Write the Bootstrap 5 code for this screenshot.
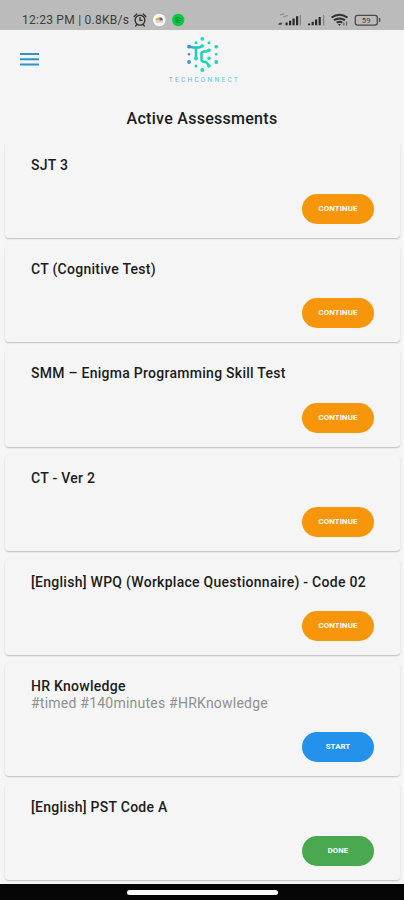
<!DOCTYPE html>
<html lang="en">
<head>
<meta charset="utf-8">
<meta name="viewport" content="width=device-width, initial-scale=1">
<title>Active Assessments</title>
<link href="https://cdn.jsdelivr.net/npm/bootstrap@5.3.0/dist/css/bootstrap.min.css" rel="stylesheet">
<style>
body{font-family:Roboto,"Liberation Sans",sans-serif;background:#f5f5f5;color:#1c1c1c}
.screen{height:900px}
.status{height:30px;background:#bbb;padding:10px 23px 0 22px;color:#3d3d3d}
.clock{font-size:12px;line-height:21px;letter-spacing:.25px;width:110px;white-space:nowrap}
.topbar{height:60px;padding-left:20px}
.menu{line-height:0;margin-top:22px}
.logo{margin-left:128px;margin-top:5px}
.heading{font-size:16px;line-height:20px;font-weight:500;letter-spacing:.28px;padding-top:19px;height:52px}
.item{height:96.2px;margin:0 4px 8px 5px;padding:15px 26px 14px;border-radius:4px;box-shadow:0 1px 1.5px rgba(0,0,0,.22)}
.item.tall{height:112.6px}
.name{font-size:14px;line-height:17px;font-weight:500;letter-spacing:.27px;white-space:nowrap}
.tags{font-size:14px;line-height:16px;letter-spacing:.23px;color:#909090}
.action{width:72px;height:30px;border:0;border-radius:15px;font-size:7.8px;font-weight:700;letter-spacing:.1px;color:#fff;padding:0;line-height:30px}
.action:hover{color:#fff}
.go{background:#f8960b}.begin{background:#2491eb}.finished{background:#4aa850}
.homebar{height:16px;background:#050505}
.pill{width:151px;height:5px;background:#fff}
</style>
</head>
<body>
<div class="screen d-flex flex-column overflow-hidden">
  <div class="status d-flex flex-shrink-0">
    <span class="clock">12:23 PM | 0.8KB/s</span>
    <svg width="54" height="20" viewBox="132 10 54 20">
      <g fill="none" stroke="#333" stroke-width="1.4" stroke-linecap="round"><circle cx="140" cy="20.2" r="4.9"/><path d="M134.2 16.5l2.6-2.4M145.800 16.500l-2.600-2.400M140 17.600v2.800h2M136.700 24.700l-1 1.200M143.300 24.700l1 1.200"/></g>
      <circle cx="159.300" cy="20" r="6.300" fill="#f7f7f5"/><path d="M155.500 20.500a3.200 3.200 0 0 1 4-3v3z" fill="#eda52d"/><path d="M159.500 17.200a3 3 0 0 1 3.300 3.300h-3.300z" fill="#725a70"/><path d="M156 22h7" stroke="#aab4c8" stroke-width="1"/>
      <circle cx="178.200" cy="20" r="6.200" fill="#0bc744"/><path d="M175 18.200q3.300-1 6.500.6M175.300 20.300q3-.8 5.600.5M175.600 22.200q2.500-.6 4.600.4" fill="none" stroke="#087c31" stroke-width=".9"/>
    </svg>
    <svg class="ms-auto" width="106" height="20" viewBox="276 10 106 20">
      <path d="M281 15l4-1.200M284 17l5-1.500" stroke="#8c8c8c" stroke-width="1.300"/><path d="M279 24.800l1.500-2h3l-1 2z" fill="#444"/>
      <g fill="#292929"><path d="M286.500 22.500h2.200v2.800h-2.200zM290 20.700h2.200v4.600H290zM293.500 18.500h2.200v6.800h-2.200zM297 16.300h2.200v9H297z"/><path d="M309 23.500h2.200v1.800H309zM312.600 21.800h2.200v3.500h-2.200zM316 19.600h2.200v5.700H316zM319.600 17h2.200v8.300h-2.200z"/></g>
      <path d="M301.300 15v10.300M324.700 15v10.300" stroke="#777" stroke-width="1"/>
      <g fill="none" stroke="#303030" stroke-width="2"><path d="M332.500 17.500q8-5.500 16 0M335 20.200q5.500-3.600 11 0M337.700 22.700q2.800-1.800 5.600 0"/></g><path d="M339 23.900h3l-1.500 2z" fill="#303030"/><path d="M344.800 25.500v-3M347.500 21.500v4" stroke="#666" stroke-width="1.200"/>
      <rect x="356.300" y="15.300" width="22" height="9.800" rx="2.300" fill="none" stroke="#494949" stroke-width="1.300"/><path d="M380.600 18v4" stroke="#555" stroke-width="1.500"/><text x="367.200" y="23" text-anchor="middle" font-family="Roboto,sans-serif" font-size="7.800" fill="#444">59</text>
    </svg>
  </div>

  <header class="topbar d-flex align-items-start flex-shrink-0">
    <div class="menu" role="button" aria-label="Menu">
      <svg width="20" height="15" viewBox="20 52 20 15"><path d="M20 54h19M20 59.300h19M20 64.500h19" stroke="#2e91d6" stroke-width="2"/></svg>
    </div>
    <svg class="logo" width="72" height="50" viewBox="168 35 72 50">
      <defs><linearGradient id="tc" gradientUnits="userSpaceOnUse" x1="187" y1="0" x2="211" y2="0"><stop stop-color="#3d8fc9"/><stop offset=".35" stop-color="#23c5c2"/><stop offset="1" stop-color="#15e2b2"/></linearGradient>
      <linearGradient id="word" gradientUnits="userSpaceOnUse" x1="168" y1="0" x2="238" y2="0"><stop stop-color="#69acd4"/><stop offset="1" stop-color="#55d6df"/></linearGradient></defs>
      <g fill="none" stroke="url(#tc)" stroke-width="2.500" stroke-linejoin="round"><path d="M189 46.600l4.500.8h6l3-1.800M196 47.400v11.500M209 50.200l-2.500 1.200h-3l-2 1.600v7.200l2 1.800h2.500l3 3.500"/></g>
      <g fill="#16ddb2"><circle cx="202.300" cy="38.800" r="1.900"/><circle cx="209" cy="42.700" r="1.500"/><circle cx="196" cy="42.700" r="1.500"/><circle cx="202.300" cy="46" r="1.700"/><circle cx="209" cy="50.200" r="1.800"/><circle cx="196" cy="58.500" r="2"/><circle cx="209" cy="58.300" r="1.700"/><circle cx="209" cy="66" r="1.800"/><circle cx="202.300" cy="70" r="2"/><circle cx="196" cy="66" r="1.500"/></g>
      <g fill="#2fc3b9"><circle cx="216.200" cy="46.700" r="1.800"/><circle cx="216.200" cy="54.300" r="1.300"/><circle cx="216.200" cy="62" r="1.900"/></g>
      <g fill="#3f96c6"><circle cx="189" cy="46.700" r="1.900"/><circle cx="189" cy="54.300" r="1.300"/><circle cx="189" cy="62" r="1.900"/></g>
      <text x="168.800" y="81.800" textLength="69" font-family="Roboto,sans-serif" font-size="6.600" fill="url(#word)">TECHCONNECT</text>
    </svg>
  </header>

  <h1 class="heading text-center m-0 flex-shrink-0">Active Assessments</h1>

  <main class="flex-grow-1 overflow-hidden">
    <section class="item d-flex flex-column justify-content-between"><div class="name">SJT 3</div><button class="btn action go align-self-end">CONTINUE</button></section>
    <section class="item d-flex flex-column justify-content-between"><div class="name">CT (Cognitive Test)</div><button class="btn action go align-self-end">CONTINUE</button></section>
    <section class="item d-flex flex-column justify-content-between"><div class="name">SMM – Enigma Programming Skill Test</div><button class="btn action go align-self-end">CONTINUE</button></section>
    <section class="item d-flex flex-column justify-content-between"><div class="name">CT - Ver 2</div><button class="btn action go align-self-end">CONTINUE</button></section>
    <section class="item d-flex flex-column justify-content-between"><div class="name">[English] WPQ (Workplace Questionnaire) - Code 02</div><button class="btn action go align-self-end">CONTINUE</button></section>
    <section class="item tall d-flex flex-column justify-content-between"><div><div class="name">HR Knowledge</div><div class="tags">#timed #140minutes #HRKnowledge</div></div><button class="btn action begin align-self-end">START</button></section>
    <section class="item d-flex flex-column justify-content-between"><div class="name">[English] PST Code A</div><button class="btn action finished align-self-end">DONE</button></section>
  </main>

  <footer class="homebar d-flex justify-content-center align-items-center flex-shrink-0"><div class="pill rounded-pill"></div></footer>
</div>
<script src="https://cdn.jsdelivr.net/npm/bootstrap@5.3.0/dist/js/bootstrap.bundle.min.js"></script>
</body>
</html>
